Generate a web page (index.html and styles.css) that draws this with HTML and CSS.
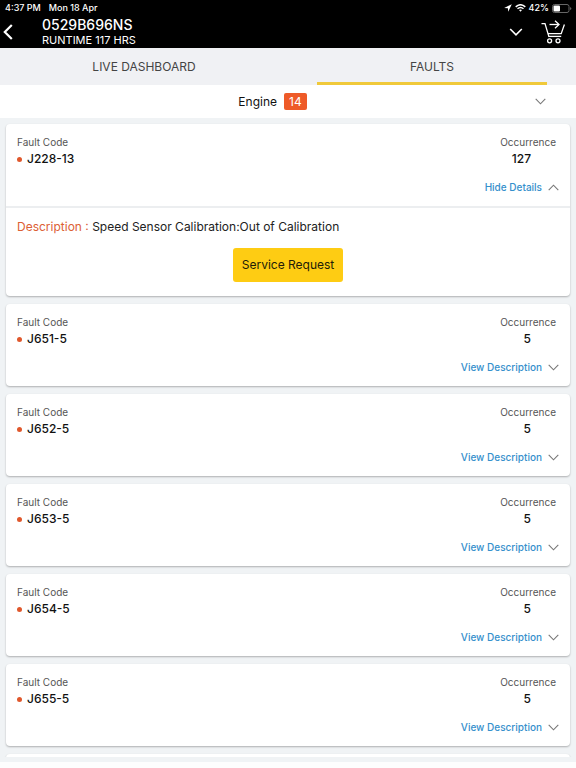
FILE: index.html
```html
<!DOCTYPE html>
<html lang="en">
<head>
  <meta charset="UTF-8" />
  <meta name="viewport" content="width=device-width, initial-scale=1.0"/>
  <title>Faults</title>
  <link rel="stylesheet" href="styles.css">
</head>
<body>
  <header class="top">
    <div class="status-bar">
      <span>4:37 PM</span>
      <span>Mon 18 Apr</span>
      <div class="status-icons">
        <svg width="8" height="8" viewBox="0 0 8 8"><path d="M7.8 0.2L0.2 3.9L3.9 4.2L4.2 7.8Z" fill="#fff"/></svg>
        <svg width="11" height="8" viewBox="0 0 11 8" fill="none" stroke="#fff" stroke-width="1.5"><path d="M0.7 2.9Q5.5 -1.4 10.3 2.9"/><path d="M2.5 4.8Q5.5 2.2 8.5 4.8"/><path d="M4 6L5.5 7.7L7 6Q5.5 5 4 6Z" fill="#fff" stroke="none"/></svg>
        <span>42%</span>
        <svg width="20" height="9" viewBox="0 0 20 9"><rect x="0.5" y="0.5" width="16.5" height="8" rx="2" fill="none" stroke="#666"/><rect x="1.5" y="1.5" width="6.5" height="6" rx="1" fill="#fff"/><path d="M18.2 3v3q1.1-0.5 1.1-1.5T18.2 3z" fill="#777"/></svg>
      </div>
    </div>
    <div class="machine">
      <button class="icon-btn back" aria-label="Back">
        <svg width="10" height="16" viewBox="0 0 10 16" fill="none" stroke="#fff" stroke-width="2.2"><path d="M8.8 1L1.8 8L8.8 15"/></svg>
      </button>
      <div class="machine-info">
        <h1>0529B696NS</h1>
        <p>RUNTIME 117 HRS</p>
      </div>
      <button class="icon-btn" aria-label="Select machine">
        <svg width="14" height="8" viewBox="0 0 14 8" fill="none" stroke="#fff" stroke-width="1.6"><path d="M1.2 1L7 6.8L12.8 1"/></svg>
      </button>
      <button class="icon-btn cart" aria-label="Cart">
        <svg width="25" height="24" viewBox="0 0 25 24" fill="none" stroke="#fff" stroke-width="1.3"><path d="M0.5 3.6H4L7.8 16.4"/><path d="M23.4 4.5L20.2 13.6H7"/><path d="M7.2 16.4H20.2"/><path d="M8.5 4.5H17.5"/><path d="M14 0.8L18 4.5L14 8.2"/><circle cx="8.6" cy="20.8" r="2"/><circle cx="17" cy="20.8" r="2"/></svg>
      </button>
    </div>
  </header>

  <nav class="tabs">
    <a href="#dashboard">LIVE DASHBOARD</a>
    <a href="#faults" class="active">FAULTS</a>
  </nav>

  <button class="group">
    <span class="group-name">Engine <span class="count">14</span></span>
    <svg width="11" height="7" viewBox="0 0 11 7"><path d="M0.7 0.8L5.5 5.8L10.3 0.8"/></svg>
  </button>

  <main class="faults">
    <article class="card">
      <div class="summary">
        <div class="row label"><span>Fault Code</span><span>Occurrence</span></div>
        <div class="row value"><span class="code">J228-13</span><span class="number">127</span></div>
        <button class="toggle">Hide Details <svg width="11" height="7" viewBox="0 0 11 7"><path d="M0.7 6.2L5.5 1.2L10.3 6.2"/></svg></button>
      </div>
      <div class="details">
        <p><span class="key">Description :</span> Speed Sensor Calibration:Out of Calibration</p>
        <button class="request">Service Request</button>
      </div>
    </article>

    <article class="card">
      <div class="summary">
        <div class="row label"><span>Fault Code</span><span>Occurrence</span></div>
        <div class="row value"><span class="code">J651-5</span><span class="number">5</span></div>
        <button class="toggle">View Description <svg width="11" height="7" viewBox="0 0 11 7"><path d="M0.7 0.8L5.5 5.8L10.3 0.8"/></svg></button>
      </div>
    </article>

    <article class="card">
      <div class="summary">
        <div class="row label"><span>Fault Code</span><span>Occurrence</span></div>
        <div class="row value"><span class="code">J652-5</span><span class="number">5</span></div>
        <button class="toggle">View Description <svg width="11" height="7" viewBox="0 0 11 7"><path d="M0.7 0.8L5.5 5.8L10.3 0.8"/></svg></button>
      </div>
    </article>

    <article class="card">
      <div class="summary">
        <div class="row label"><span>Fault Code</span><span>Occurrence</span></div>
        <div class="row value"><span class="code">J653-5</span><span class="number">5</span></div>
        <button class="toggle">View Description <svg width="11" height="7" viewBox="0 0 11 7"><path d="M0.7 0.8L5.5 5.8L10.3 0.8"/></svg></button>
      </div>
    </article>

    <article class="card">
      <div class="summary">
        <div class="row label"><span>Fault Code</span><span>Occurrence</span></div>
        <div class="row value"><span class="code">J654-5</span><span class="number">5</span></div>
        <button class="toggle">View Description <svg width="11" height="7" viewBox="0 0 11 7"><path d="M0.7 0.8L5.5 5.8L10.3 0.8"/></svg></button>
      </div>
    </article>

    <article class="card">
      <div class="summary">
        <div class="row label"><span>Fault Code</span><span>Occurrence</span></div>
        <div class="row value"><span class="code">J655-5</span><span class="number">5</span></div>
        <button class="toggle">View Description <svg width="11" height="7" viewBox="0 0 11 7"><path d="M0.7 0.8L5.5 5.8L10.3 0.8"/></svg></button>
      </div>
    </article>

    <!-- top edge of the next card -->
    <article class="card next"></article>
  </main>
  <div class="home-area"></div>
</body>
</html>
```

FILE: styles.css
```css
* {
  box-sizing: border-box;
}

body {
  margin: 0;
  height: 100vh;
  display: flex;
  flex-direction: column;
  overflow: hidden;
  background: #f0f3f5;
  color: #111;
  font-family: Inter, "Liberation Sans", sans-serif;
}

h1, p {
  margin: 0;
}

button {
  margin: 0;
  padding: 0;
  border: none;
  background: none;
  color: inherit;
  font-family: inherit;
  cursor: pointer;
}

svg {
  display: block;
  flex-shrink: 0;
}

/* header */
.top {
  background: #000;
  color: #fff;
}

.status-bar {
  display: flex;
  align-items: center;
  gap: 8px;
  padding: 0 4px 0 5px;
  font-size: 9px;
  line-height: 16px;
  font-weight: 500;
}

.status-icons {
  display: flex;
  align-items: center;
  gap: 3px;
  margin-left: auto;
}

.machine {
  display: flex;
  align-items: center;
  height: 32px;
  padding: 0 10px 0 3px;
}

.machine-info {
  flex: 1;
  margin-left: 29px;
}

.machine-info h1 {
  font-size: 14px;
  line-height: 16px;
  font-weight: 500;
}

.machine-info p {
  font-size: 11px;
  line-height: 14px;
}

.cart {
  margin-left: 18px;
}

/* tabs */
.tabs {
  display: flex;
  height: 37px;
  background: #f0f1f4;
}

.tabs a {
  flex: 1;
  margin: 0 29px;
  border-bottom: 3px solid transparent;
  color: #444;
  font-size: 12px;
  line-height: 38px;
  text-align: center;
  text-decoration: none;
}

.tabs .active {
  border-color: #f0c93a;
}

/* engine row */
.group {
  display: flex;
  align-items: center;
  height: 33px;
  padding: 0 30px 0 10px;
  flex-shrink: 0;
  background: #fff;
  color: #111;
  font-size: 12px;
}

.group-name {
  flex: 1;
  display: flex;
  align-items: center;
  justify-content: center;
  gap: 7px;
}

.count {
  padding: 0 5px;
  border-radius: 2px;
  background: #ee5a28;
  color: #fff;
  line-height: 17px;
}

.group path,
.toggle path {
  fill: none;
  stroke: #777;
  stroke-width: 1.1;
}

/* fault list */
.faults {
  flex: 1;
  min-height: 0;
  display: flex;
  flex-direction: column;
  gap: 8px;
  padding: 6px 6px 0;
  overflow: hidden;
}

.card {
  flex-shrink: 0;
  border-radius: 4px;
  background: #fff;
  box-shadow: 0 1px 2px rgba(0, 0, 0, 0.28);
}

.summary {
  display: flex;
  flex-direction: column;
  height: 82px;
  padding: 10px 11px 0;
}

.row {
  display: flex;
  justify-content: space-between;
  padding-right: 3px;
}

.label {
  color: #555;
  font-size: 10px;
  line-height: 16px;
}

.value {
  font-size: 12px;
  line-height: 18px;
  font-weight: 500;
}

.code {
  display: flex;
  align-items: center;
  gap: 5px;
}

.code::before {
  content: "";
  width: 5px;
  height: 5px;
  border-radius: 50%;
  background: #e0582c;
}

.number {
  padding-right: 25px;
}

.toggle {
  display: flex;
  align-items: center;
  align-self: flex-end;
  gap: 6px;
  margin-top: 11px;
  color: #3590cc;
  font-size: 10px;
  line-height: 16px;
  font-weight: 500;
}

.details {
  display: flex;
  flex-direction: column;
  align-items: center;
  gap: 13px;
  padding: 11px 11px 14px;
  border-top: 2px solid #eceef0;
  color: #222;
  font-size: 12px;
  line-height: 16px;
}

.details p {
  align-self: stretch;
}

.key {
  color: #dc6035;
}

.request {
  padding: 0 9px;
  border-radius: 3px;
  background: #fecc13;
  color: #221c08;
  font-size: 12px;
  line-height: 34px;
}

.next {
  height: 82px;
}

.home-area {
  height: 11px;
  flex-shrink: 0;
  border-bottom: 6px solid #fdfdfd;
}
```
